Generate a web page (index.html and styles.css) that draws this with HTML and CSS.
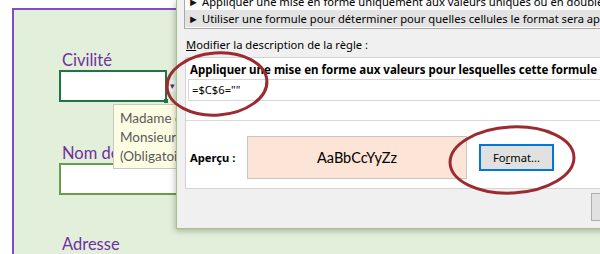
FILE: index.html
```html
<!DOCTYPE html>
<html lang="fr">
<head>
    <meta charset="UTF-8">
    <title>Mise en forme conditionnelle</title>
    <link rel="stylesheet" href="styles.css">
</head>
<body>

    <!-- Feuille de saisie -->
    <div class="sheet">
        <div class="form">
            <div class="field-label">Civilité</div>
            <div class="cell-row">
                <div class="cell cell-active"><span class="handle"></span></div>
                <span class="drop">&#9662;</span>
            </div>
            <div class="field-label">Nom de famille</div>
            <div class="cell cell-name"></div>
            <div class="field-label">Adresse</div>
        </div>
    </div>

    <!-- Info-bulle de validation -->
    <div class="tooltip">
        <p>Madame ou</p>
        <p>Monsieur</p>
        <p>(Obligatoire)</p>
    </div>

    <!-- Boite de dialogue -->
    <div class="dialog">
        <div class="rule-list">
            <div class="rule-item"><span class="arrow">&#9658;</span>Appliquer une mise en forme uniquement aux valeurs uniques ou en double</div>
            <div class="rule-item selected"><span class="arrow">&#9658;</span>Utiliser une formule pour déterminer pour quelles cellules le format sera appliqué</div>
        </div>

        <div class="section-title"><u>M</u>odifier la description de la règle :</div>

        <div class="panel">
            <div class="panel-top">
                <div class="panel-heading">Appliquer une mise en forme aux valeurs pour lesquelles cette formule est vraie :</div>
                <div class="formula">=$C$6=""</div>
            </div>
            <div class="panel-bottom">
                <div class="preview-label">Aperçu :</div>
                <div class="preview">AaBbCcYyZz</div>
                <button class="btn btn-format">Fo<u>r</u>mat...</button>
            </div>
        </div>

        <div class="dialog-footer">
            <button class="btn btn-ok"></button>
        </div>
    </div>

    <!-- Annotations a main levee -->
    <svg class="marks" width="600" height="254" viewBox="0 0 600 254">
        <ellipse cx="217" cy="84" rx="50" ry="31" transform="rotate(-4 217 84)"/>
        <ellipse cx="512" cy="160" rx="62" ry="33" transform="rotate(-3 512 160)"/>
    </svg>

</body>
</html>
```

FILE: styles.css
```css
* {
    margin: 0;
    padding: 0;
    box-sizing: border-box;
}

html, body {
    width: 600px;
    height: 254px;
    overflow: hidden;
    background: #ffffff;
}

body {
    position: relative;
    font-family: 'Noto Sans', sans-serif;
}

/* Feuille Excel */
.sheet {
    margin: 8px 0 0 12px;
    height: 246px;
    background: #e2efda;
    border-left: 2px solid #7e4fbd;
    border-top: 2px solid #7e4fbd;
}

.form {
    display: flex;
    flex-direction: column;
    padding: 40px 0 0 45px;
}

.field-label {
    font-family: 'Lato', sans-serif;
    font-size: 16.5px;
    line-height: 20px;
    color: #7030a0;
    padding-left: 3px;
}

.cell-row {
    display: flex;
    align-items: flex-end;
    gap: 1px;
}

.cell {
    height: 32px;
    background: #ffffff;
}

.cell-active {
    width: 108px;
    border: 2px solid #217346;
    position: relative;
}

.handle {
    position: absolute;
    right: -3px;
    bottom: -3px;
    width: 4px;
    height: 4px;
    background: #217346;
}

.drop {
    width: 9px;
    height: 12px;
    margin-bottom: 10px;
    font-size: 9px;
    line-height: 12px;
    text-align: center;
    color: #444;
    background: #f3f3f3;
}

.cell-row + .field-label {
    margin-top: 41px;
}

.cell-name {
    width: 140px;
    border: 2px solid #6b9b4d;
}

.cell-name + .field-label {
    margin-top: 39px;
}

/* Info-bulle */
.tooltip {
    position: absolute;
    left: 113px;
    top: 104px;
    width: 90px;
    height: 65px;
    padding: 4px 0 0 6px;
    background: #fdfde3;
    border: 1px solid #c9c9c0;
    font-family: 'Lato', sans-serif;
    font-size: 13.5px;
    line-height: 19px;
    color: #5a5a5a;
}

/* Dialogue */
.dialog {
    position: absolute;
    left: 176px;
    top: 0;
    width: 440px;
    height: 229px;
    padding-left: 7px;
    background: #f0f0f0;
    border-left: 1px solid #a3c28a;
    border-bottom: 1px solid #a3c28a;
    box-shadow: -1px 2px 6px rgba(0, 0, 0, 0.25);
    font-size: 11.2px;
    color: #000;
    display: flex;
    flex-direction: column;
}

.rule-list {
    margin-top: -8px;
    border: 1px solid #a9a9a9;
    border-right: none;
    background: #fbfbfb;
    padding-bottom: 1px;
}

.rule-item {
    height: 17px;
    line-height: 17px;
    padding-left: 3px;
    white-space: nowrap;
}

.rule-item.selected {
    background: #e3e3e3;
}

.arrow {
    display: inline-block;
    width: 14px;
    font-size: 11px;
    color: #111;
}

.section-title {
    margin-top: 8px;
    line-height: 16px;
    padding-left: 2px;
}

.panel {
    margin-top: 4px;
    height: 132px;
    background: #ffffff;
    border: 1px solid #d4d4d4;
    border-right: none;
    margin-left: 1px;
}

.panel-top {
    height: 63px;
    padding-top: 4px;
    border-bottom: 1px solid #dadada;
}

.panel-heading {
    font-weight: bold;
    font-size: 11.5px;
    line-height: 16px;
    padding-left: 4px;
    white-space: nowrap;
}

.formula {
    margin: 1px 0 0 2px;
    height: 22px;
    line-height: 20px;
    padding-left: 3px;
    border: 1px solid #d6d6d6;
    border-right: none;
}

.panel-bottom {
    display: flex;
    align-items: center;
    height: 67px;
    padding-left: 4px;
}

.preview-label {
    font-weight: bold;
    width: 57px;
    padding-top: 5px;
}

.preview {
    width: 220px;
    height: 43px;
    margin-top: 6px;
    background: #fce4d6;
    border: 1px solid #c6c6c6;
    font-family: 'Lato', sans-serif;
    font-size: 14.5px;
    line-height: 41px;
    text-align: center;
}

.btn {
    font-family: 'Noto Sans', sans-serif;
    font-size: 11.2px;
    color: #000;
    background: #e1e1e1;
    border: 1px solid #adadad;
}

.btn-format {
    width: 75px;
    height: 27px;
    margin: 6px 0 0 12px;
    border: 2px solid #0078d7;
}

.dialog-footer {
    display: flex;
    padding: 4px 0 0 407px;
}

.btn-ok {
    width: 60px;
    height: 28px;
}

/* Cercles rouges */
.marks {
    position: absolute;
    left: 0;
    top: 0;
    pointer-events: none;
}

.marks ellipse {
    fill: none;
    stroke: #9c2a30;
    stroke-width: 3;
}
```
